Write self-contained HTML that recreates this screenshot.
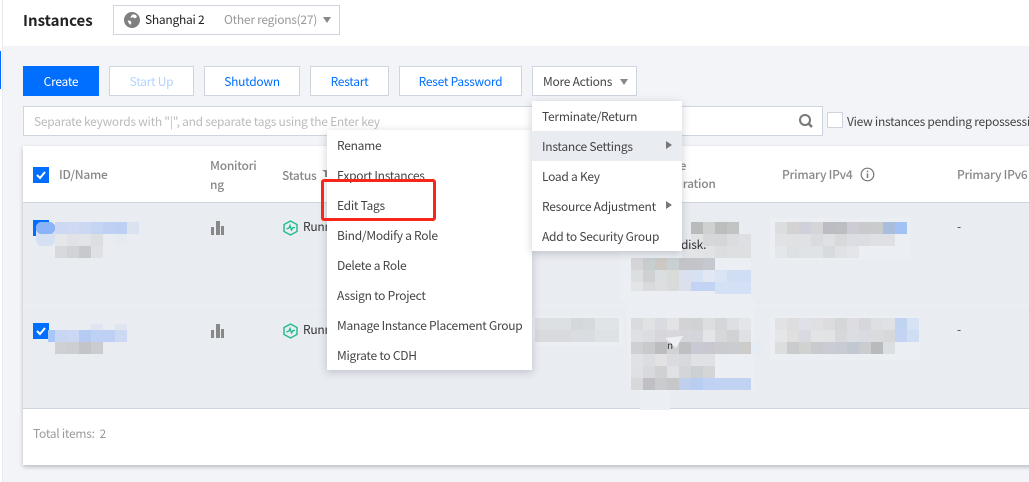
<!DOCTYPE html>
<html><head><meta charset="utf-8"><style>
html,body{margin:0;padding:0}
body{width:1029px;height:482px;overflow:hidden;position:relative;background:#f2f4f8;font:12px/18px "Noto Sans CJK SC","Liberation Sans",sans-serif;color:#444;letter-spacing:-.26px}
div,span.a{position:absolute;box-sizing:border-box}
.t{white-space:nowrap}
.b{top:66px;height:30px;background:#fff;border:1px solid #cfd5de;text-align:center;line-height:29px;color:#006eff}
.h{color:#888;font-weight:500}
.m{left:0;width:100%;height:30px;padding-left:10px;line-height:30px;color:#444;white-space:nowrap}
.ar{width:0;height:0;border-left:6px solid #777;border-top:4px solid transparent;border-bottom:4px solid transparent}
svg{position:absolute;display:block}
</style></head><body>
<div style="left:0;top:0;width:3px;height:482px;background:#fff;border-right:1px solid #e8eaef"></div>
<div style="left:0;top:51px;width:1px;height:38px;background:#006eff"></div>
<div style="left:3px;top:0;width:1026px;height:46px;background:#fff"></div>
<div class="t" style="left:23px;top:9px;font-size:15px;line-height:24px;font-weight:700;color:#222;letter-spacing:0">Instances</div>
<div style="left:113px;top:5px;width:227px;height:30px;background:#fff;border:1px solid #cfd5de"></div>
<svg style="left:124px;top:12px" width="16" height="16" viewBox="0 0 16 16"><circle cx="8" cy="8" r="8" fill="#7f7f7f"/><path d="M9 2.2 L12 3 L13 5 L10.5 6.5 L9 5 L6.5 6.2 L7 4Z M3.5 8.5 L6.5 8.7 L7.5 10.7 L6.2 13 L5 11.5 Z" fill="#fff"/></svg>
<div class="t" style="left:145px;top:11px;color:#222">Shanghai 2</div>
<div class="t" style="left:224px;top:11px;color:#999">Other regions(27)</div>
<div style="left:323px;top:17px;width:0;height:0;border-top:6px solid #888;border-left:4px solid transparent;border-right:4px solid transparent"></div>

<div class="b" style="left:23px;width:76px;background:#006eff;border-color:#006eff;color:#fff">Create</div>
<div class="b" style="left:109px;width:85px;color:#b2d3ff">Start Up</div>
<div class="b" style="left:204px;width:96px">Shutdown</div>
<div class="b" style="left:310px;width:79px">Restart</div>
<div class="b" style="left:399px;width:123px">Reset Password</div>
<div class="b" style="left:532px;width:105px;color:#444;text-align:left;padding-left:10px">More Actions</div>
<div style="left:620px;top:79px;width:0;height:0;border-top:6px solid #888;border-left:4px solid transparent;border-right:4px solid transparent"></div>

<div style="left:23px;top:106px;width:800px;height:30px;background:#fff;border:1px solid #cfd5de"></div>
<div class="t" style="left:34px;top:113px;color:#bbb">Separate keywords with "|", and separate tags using the Enter key</div>
<svg style="left:798px;top:113px" width="16" height="16" viewBox="0 0 16 16"><circle cx="7" cy="7" r="5" fill="none" stroke="#777" stroke-width="2"/><path d="M10.5 10.5L14 14" stroke="#777" stroke-width="2.4"/></svg>
<div style="left:827px;top:112px;width:16px;height:16px;background:#fff;border:1px solid #cfd5de"></div>
<div class="t" style="left:847px;top:113px;color:#444">View instances pending repossessi</div>

<div style="left:23px;top:146px;width:1010px;height:319px;background:#fff;box-shadow:0 2px 4px rgba(54,58,80,.3)"></div>
<div style="left:23px;top:202px;width:1006px;height:207px;background:#e9ecf1;border-top:1px solid #cfd5de;border-bottom:1px solid #cfd5de"></div>
<div style="left:23px;top:305px;width:1006px;height:1px;background:#eef0f4"></div>

<div style="left:33px;top:167px;width:16px;height:16px;background:#006eff"></div>
<svg style="left:33px;top:167px" width="16" height="16"><path d="M4 8l3 3 5-6" fill="none" stroke="#fff" stroke-width="2"/></svg>
<div class="t h" style="left:59px;top:166px">ID/Name</div>
<div class="h" style="left:210px;top:156px;width:60px;line-height:19px;word-break:break-all">Monitori<br>ng</div>
<div class="t h" style="left:282px;top:167px">Status</div>
<div style="left:322px;top:170px;width:5px;height:7px;background:#888;clip-path:polygon(0 0,100% 0,100% 100%,60% 100%,60% 30%,0 0)"></div>
<div class="t h" style="left:640px;top:157px">Instance</div>
<div class="t h" style="left:640px;top:175px">Configuration</div>
<div class="t h" style="left:782px;top:166px">Primary IPv4</div>
<svg style="left:860px;top:167px" width="15" height="15" viewBox="0 0 15 15"><circle cx="7.5" cy="7.5" r="6.3" fill="none" stroke="#777" stroke-width="1.2"/><path d="M7.5 6.5v4.5M7.5 3.6v1.6" stroke="#777" stroke-width="1.5"/></svg>
<div class="t h" style="left:957px;top:166px">Primary IPv6</div>

<div style="left:33px;top:220px;width:16px;height:16px;background:#006eff"></div>
<div style="left:33px;top:323px;width:16px;height:16px;background:#006eff"></div>
<svg style="left:33px;top:323px" width="16" height="16"><path d="M4 8l3 3 5-6" fill="none" stroke="#fff" stroke-width="2"/></svg>

<svg style="left:211px;top:221px" width="14" height="14"><path d="M0 6h3v8H0zM5 0h4v14H5zM10 5h3v9h-3z" fill="#888"/></svg>
<svg style="left:211px;top:324px" width="14" height="14"><path d="M0 6h3v8H0zM5 0h4v14H5zM10 5h3v9h-3z" fill="#888"/></svg>
<svg style="left:283px;top:220px" width="15" height="16" viewBox="0 0 15 16"><path d="M7.5 1L14 4.5v7L7.5 15 1 11.5v-7z" fill="none" stroke="#1fb98c" stroke-width="1.4"/><path d="M3.5 9L6 8 7 5.5 8.5 10 10 7.5h2" fill="none" stroke="#1fb98c" stroke-width="1.3"/></svg>
<svg style="left:283px;top:323px" width="15" height="16" viewBox="0 0 15 16"><path d="M7.5 1L14 4.5v7L7.5 15 1 11.5v-7z" fill="none" stroke="#1fb98c" stroke-width="1.4"/><path d="M3.5 9L6 8 7 5.5 8.5 10 10 7.5h2" fill="none" stroke="#1fb98c" stroke-width="1.3"/></svg>
<div class="t" style="left:303px;top:218px;color:#333">Running</div>
<div class="t" style="left:303px;top:321px;color:#333">Running</div>
<div class="t" style="left:957px;top:218px;color:#444">-</div>
<div class="t" style="left:957px;top:321px;color:#444">-</div>
<div class="t" style="left:33px;top:425px;color:#999">Total items:&nbsp; 2</div>

<svg style="left:0;top:0" width="1029" height="482" shape-rendering="crispEdges">
<g>
<path d="M620 251h90l40 5v44h-130zM625 300h130v90h-125zM528 316h95v30h-95zM640 390h30v20h-30zM770 218h140v42h-140zM770 316h150v44h-150z" fill="#ebeef3"/>
<rect x="36" y="222" width="19" height="24" rx="6" fill="#d5e0f3"/>
<rect x="36" y="222" width="19" height="12" rx="5" fill="#8ab3f8"/>
<rect x="55" y="222" width="12" height="12" fill="#cdd9f3"/><rect x="67" y="222" width="12" height="12" fill="#cfdaf2"/><rect x="79" y="222" width="12" height="12" fill="#ccd8f2"/><rect x="91" y="222" width="12" height="12" fill="#c4d4f3"/><rect x="103" y="222" width="12" height="12" fill="#bed1f5"/><rect x="115" y="222" width="12" height="12" fill="#bdd0f4"/><rect x="127" y="222" width="12" height="12" fill="#dbe3f1"/>
<rect x="55" y="234" width="12" height="12" fill="#e4e6ea"/><rect x="67" y="234" width="12" height="12" fill="#e0e2e6"/><rect x="79" y="234" width="12" height="12" fill="#e2e4e8"/><rect x="91" y="234" width="12" height="12" fill="#dcdee2"/><rect x="115" y="234" width="12" height="12" fill="#e6eaf1"/>
<rect x="55" y="246" width="12" height="12" fill="#d8d9dc"/><rect x="67" y="246" width="12" height="12" fill="#d2d3d6"/><rect x="79" y="246" width="12" height="12" fill="#c8c9cc"/><rect x="91" y="246" width="12" height="12" fill="#e0e1e5"/>
<rect x="48" y="330" width="7" height="12" fill="#a9c6f8"/><rect x="55" y="330" width="12" height="12" fill="#c8d6f3"/><rect x="67" y="330" width="12" height="12" fill="#cbd8f3"/><rect x="79" y="330" width="12" height="12" fill="#b5cbf4"/><rect x="91" y="330" width="12" height="12" fill="#bed0f4"/><rect x="103" y="330" width="12" height="12" fill="#bed0f4"/><rect x="115" y="330" width="12" height="12" fill="#cdd9f2"/>
<rect x="91" y="324" width="12" height="6" fill="#dfe6f2"/><rect x="115" y="324" width="12" height="6" fill="#dfe6f2"/>
<rect x="55" y="342" width="12" height="12" fill="#cfd0d3"/><rect x="67" y="342" width="12" height="12" fill="#cdced1"/><rect x="79" y="342" width="12" height="12" fill="#c3c4c7"/><rect x="91" y="342" width="12" height="12" fill="#cbccd0"/>
</g>
<g id="cfg1">
<rect x="691" y="222" width="12" height="12" fill="#b9babc"/><rect x="703" y="222" width="12" height="12" fill="#cfd1d1"/><rect x="715" y="222" width="12" height="12" fill="#bcbdbd"/><rect x="727" y="222" width="12" height="12" fill="#c2c3c3"/>
<rect x="691" y="234" width="12" height="12" fill="#e0e2e4"/><rect x="703" y="234" width="12" height="12" fill="#d5d7d9"/><rect x="715" y="234" width="12" height="12" fill="#d4d6d8"/><rect x="727" y="234" width="12" height="12" fill="#dadce0"/><rect x="739" y="234" width="12" height="12" fill="#dddfe2"/>
<rect x="682" y="246" width="21" height="12" fill="#e2e4e6"/><rect x="703" y="246" width="12" height="12" fill="#e0e2e4"/><rect x="715" y="246" width="12" height="12" fill="#dcdde0"/><rect x="727" y="246" width="24" height="12" fill="#dddfe0"/>
<rect x="631" y="258" width="12" height="12" fill="#d5d5d9"/><rect x="643" y="258" width="12" height="12" fill="#c8cdce"/><rect x="655" y="258" width="12" height="12" fill="#ccc9c4"/><rect x="667" y="258" width="12" height="12" fill="#c9d0d3"/><rect x="679" y="258" width="12" height="12" fill="#c3c4c7"/><rect x="691" y="258" width="12" height="12" fill="#c4c5c8"/><rect x="703" y="258" width="12" height="12" fill="#c5c8cf"/>
<rect x="631" y="270" width="12" height="12" fill="#dcdfe0"/><rect x="643" y="270" width="12" height="12" fill="#cfd0d2"/><rect x="655" y="270" width="12" height="12" fill="#dbdee0"/><rect x="667" y="270" width="12" height="12" fill="#d8dbd8"/><rect x="679" y="270" width="12" height="12" fill="#dae0ed"/><rect x="691" y="270" width="12" height="12" fill="#d6e1f4"/><rect x="703" y="270" width="12" height="12" fill="#e1e7f3"/><rect x="715" y="270" width="12" height="12" fill="#d9e4f5"/><rect x="727" y="270" width="24" height="12" fill="#d0def4"/>
<rect x="631" y="282" width="12" height="9" fill="#e2e4e6"/><rect x="643" y="282" width="12" height="9" fill="#d9dadd"/><rect x="655" y="282" width="12" height="9" fill="#dcdee0"/><rect x="667" y="282" width="12" height="9" fill="#d9dbda"/><rect x="679" y="282" width="12" height="9" fill="#dce0ea"/><rect x="691" y="282" width="24" height="9" fill="#c3d3f4"/><rect x="715" y="282" width="36" height="12" fill="#d3e0f5"/>
</g>
<g id="cfg2">
<rect x="631" y="318" width="12" height="12" fill="#d9dbde"/><rect x="643" y="318" width="12" height="12" fill="#e0e2e4"/><rect x="655" y="318" width="12" height="12" fill="#dadbe0"/><rect x="667" y="318" width="12" height="12" fill="#e3e3e5"/><rect x="679" y="318" width="12" height="12" fill="#d1d3d5"/><rect x="691" y="318" width="12" height="12" fill="#d0d2d4"/><rect x="703" y="318" width="12" height="12" fill="#dcdee0"/><rect x="715" y="318" width="12" height="12" fill="#d5d6d9"/><rect x="727" y="318" width="12" height="12" fill="#dddfe2"/><rect x="739" y="318" width="12" height="12" fill="#e3e5e8"/>
<rect x="631" y="330" width="12" height="12" fill="#dfe0e3"/><rect x="643" y="330" width="12" height="12" fill="#dcdde1"/><rect x="655" y="330" width="12" height="12" fill="#d7d6db"/><rect x="667" y="330" width="12" height="12" fill="#d8d8dc"/><rect x="679" y="330" width="12" height="12" fill="#d5d6d9"/><rect x="691" y="330" width="12" height="12" fill="#d4d5da"/><rect x="703" y="330" width="12" height="12" fill="#e3e5e8"/><rect x="715" y="330" width="12" height="12" fill="#d6d8da"/><rect x="727" y="330" width="12" height="12" fill="#d0d2d4"/><rect x="739" y="330" width="12" height="12" fill="#dee0e3"/>
<rect x="631" y="342" width="12" height="12" fill="#cfd0d4"/><rect x="643" y="342" width="12" height="12" fill="#c8cacc"/><rect x="655" y="342" width="12" height="12" fill="#bcbdc0"/><rect x="667" y="342" width="12" height="12" fill="#d1d2d4"/><rect x="679" y="342" width="12" height="12" fill="#bec0c2"/><rect x="691" y="342" width="12" height="12" fill="#c9c9d3"/><rect x="703" y="342" width="12" height="12" fill="#c9c8d0"/><rect x="715" y="342" width="12" height="12" fill="#c9cbcf"/><rect x="727" y="342" width="12" height="12" fill="#c9ccd1"/><rect x="739" y="342" width="12" height="12" fill="#cecccb"/><rect x="751" y="342" width="12" height="12" fill="#e6ecf3"/>
<rect x="631" y="354" width="12" height="12" fill="#e0e1e4"/><rect x="643" y="354" width="12" height="12" fill="#dbdee1"/><rect x="655" y="354" width="12" height="12" fill="#e2e2e3"/><rect x="667" y="354" width="12" height="12" fill="#d9dbdf"/><rect x="679" y="354" width="12" height="12" fill="#d8d9dd"/><rect x="691" y="354" width="24" height="12" fill="#dfe1e4"/>
<rect x="631" y="366" width="12" height="12" fill="#dfe0e3"/><rect x="643" y="366" width="12" height="12" fill="#d7d9dd"/><rect x="655" y="366" width="12" height="12" fill="#d0d1d3"/><rect x="667" y="366" width="12" height="12" fill="#dfe1e5"/><rect x="679" y="366" width="12" height="12" fill="#d4d5d8"/><rect x="691" y="366" width="12" height="12" fill="#cdd0d2"/><rect x="703" y="366" width="12" height="12" fill="#d3d5d7"/>
<rect x="631" y="378" width="12" height="12" fill="#d6d8da"/><rect x="643" y="378" width="12" height="12" fill="#bfbfc4"/><rect x="655" y="378" width="12" height="12" fill="#cacbce"/><rect x="667" y="378" width="12" height="12" fill="#c5c8c6"/><rect x="679" y="378" width="12" height="12" fill="#c0cfed"/><rect x="691" y="378" width="12" height="12" fill="#b9cdf2"/><rect x="703" y="378" width="12" height="12" fill="#c0d2f3"/><rect x="715" y="378" width="36" height="12" fill="#c1d3f3"/>
<path d="M665 338l18-2-7 12z" fill="#eef0f4" shape-rendering="auto"/>
</g>
<g id="mid">
<rect x="535" y="318" width="36" height="12" fill="#dde0e3"/><rect x="571" y="318" width="12" height="12" fill="#d5d8db"/><rect x="583" y="318" width="12" height="12" fill="#d7dadc"/><rect x="595" y="318" width="24" height="12" fill="#e1e4e7"/>
<rect x="535" y="330" width="36" height="12" fill="#d8dadd"/><rect x="571" y="330" width="24" height="12" fill="#d9dce0"/><rect x="595" y="330" width="24" height="12" fill="#dfe2e5"/>
</g>
<g id="ip1">
<rect x="775" y="222" width="12" height="12" fill="#dcddde"/><rect x="787" y="222" width="12" height="12" fill="#d4d2d2"/><rect x="799" y="222" width="12" height="12" fill="#cfd0da"/><rect x="811" y="222" width="12" height="12" fill="#d5d5d7"/><rect x="823" y="222" width="12" height="12" fill="#bcbdc2"/><rect x="835" y="222" width="12" height="12" fill="#bdbec1"/><rect x="847" y="222" width="12" height="12" fill="#cdcbd3"/><rect x="859" y="222" width="12" height="12" fill="#c8cacc"/><rect x="871" y="222" width="12" height="12" fill="#c9cbcc"/><rect x="883" y="222" width="12" height="12" fill="#a9bedc"/><rect x="895" y="222" width="12" height="12" fill="#a2c2f5"/>
<rect x="775" y="234" width="12" height="12" fill="#e0e2e5"/><rect x="787" y="234" width="12" height="12" fill="#e0e1e3"/><rect x="799" y="234" width="12" height="12" fill="#dfe1e4"/><rect x="811" y="234" width="12" height="12" fill="#dadbde"/><rect x="823" y="234" width="12" height="12" fill="#dee0e3"/><rect x="835" y="234" width="12" height="12" fill="#d8d9da"/><rect x="847" y="234" width="12" height="12" fill="#dcdde2"/><rect x="859" y="234" width="12" height="12" fill="#dbdde3"/><rect x="871" y="234" width="24" height="12" fill="#dee0e3"/>
<rect x="775" y="246" width="12" height="12" fill="#e4e7ea"/><rect x="787" y="246" width="12" height="12" fill="#dee1e4"/><rect x="799" y="246" width="24" height="12" fill="#e0e3e6"/><rect x="823" y="246" width="12" height="12" fill="#d8dbde"/><rect x="835" y="246" width="12" height="12" fill="#dfe1e4"/><rect x="847" y="246" width="12" height="12" fill="#e3e5e9"/>
</g>
<g id="ip2">
<rect x="775" y="318" width="12" height="12" fill="#e2e2e4"/><rect x="787" y="318" width="12" height="12" fill="#dddddf"/><rect x="799" y="318" width="12" height="12" fill="#dfe0e8"/><rect x="811" y="318" width="12" height="12" fill="#e0e0e4"/><rect x="823" y="318" width="12" height="12" fill="#dcdcdf"/><rect x="835" y="318" width="12" height="12" fill="#d5d6d8"/><rect x="847" y="318" width="12" height="12" fill="#dcdce2"/><rect x="859" y="318" width="12" height="12" fill="#d6d7da"/><rect x="871" y="318" width="12" height="12" fill="#dedfe2"/><rect x="883" y="318" width="12" height="12" fill="#dfe1e4"/><rect x="895" y="318" width="12" height="12" fill="#c0d3f1"/><rect x="907" y="318" width="12" height="12" fill="#d7e2f4"/>
<rect x="775" y="330" width="12" height="12" fill="#e4e6e8"/><rect x="787" y="330" width="12" height="12" fill="#dfdfe0"/><rect x="799" y="330" width="12" height="12" fill="#d8dae2"/><rect x="811" y="330" width="12" height="12" fill="#e2e3e5"/><rect x="823" y="330" width="12" height="12" fill="#e1e3e5"/><rect x="835" y="330" width="12" height="12" fill="#d7d8da"/><rect x="847" y="330" width="12" height="12" fill="#dcdde2"/><rect x="859" y="330" width="12" height="12" fill="#d9dbe2"/><rect x="871" y="330" width="12" height="12" fill="#d9dbdd"/><rect x="883" y="330" width="12" height="12" fill="#d6d8da"/><rect x="895" y="330" width="12" height="12" fill="#c2d4f1"/><rect x="907" y="330" width="12" height="12" fill="#d0def4"/>
<rect x="775" y="342" width="12" height="12" fill="#dcdedd"/><rect x="787" y="342" width="12" height="12" fill="#c9cbcc"/><rect x="799" y="342" width="12" height="12" fill="#d0d2d2"/><rect x="811" y="342" width="12" height="12" fill="#c8cacd"/><rect x="823" y="342" width="12" height="12" fill="#c9ccd2"/><rect x="835" y="342" width="12" height="12" fill="#c8cbd1"/><rect x="847" y="342" width="12" height="12" fill="#c2c8d2"/><rect x="859" y="342" width="12" height="12" fill="#c9cdcf"/><rect x="871" y="342" width="12" height="12" fill="#b9babb"/><rect x="883" y="342" width="12" height="12" fill="#dcdfe2"/>
</g>
</svg>
<div class="t" style="left:681px;top:236px;color:#333">disk.</div>
<div class="t" style="left:667px;top:338px;color:#333;font-size:10px;line-height:14px">n</div>

<div style="left:327px;top:130px;width:205px;height:240px;background:#fff;box-shadow:0 2px 8px rgba(54,58,80,.25)">
<div class="m" style="top:1px">Rename</div><div class="m" style="top:31px">Export Instances</div><div class="m" style="top:61px">Edit Tags</div><div class="m" style="top:91px">Bind/Modify a Role</div><div class="m" style="top:121px">Delete a Role</div><div class="m" style="top:151px">Assign to Project</div><div class="m" style="top:181px">Manage Instance Placement Group</div><div class="m" style="top:211px">Migrate to CDH</div>
</div>
<div style="left:532px;top:101px;width:150px;height:150px;background:#fff;box-shadow:0 2px 8px rgba(54,58,80,.25)">
<div class="m" style="top:1px">Terminate/Return</div><div class="m" style="top:31px;height:29px;background:linear-gradient(#fff,#fff) 0 0/0 0 no-repeat"></div><div style="left:0;top:30px;width:100%;height:30px;background:#e9ecf1"></div><div class="m" style="top:31px">Instance Settings</div><div class="m" style="top:61px">Load a Key</div><div class="m" style="top:91px">Resource Adjustment</div><div class="m" style="top:121px">Add to Security Group</div>
<div class="ar" style="left:134px;top:40px"></div><div class="ar" style="left:134px;top:100px"></div>
</div>
<div style="left:321px;top:179px;width:115px;height:42px;border:3px solid #f9261a;border-radius:3px"></div>
</body></html>
